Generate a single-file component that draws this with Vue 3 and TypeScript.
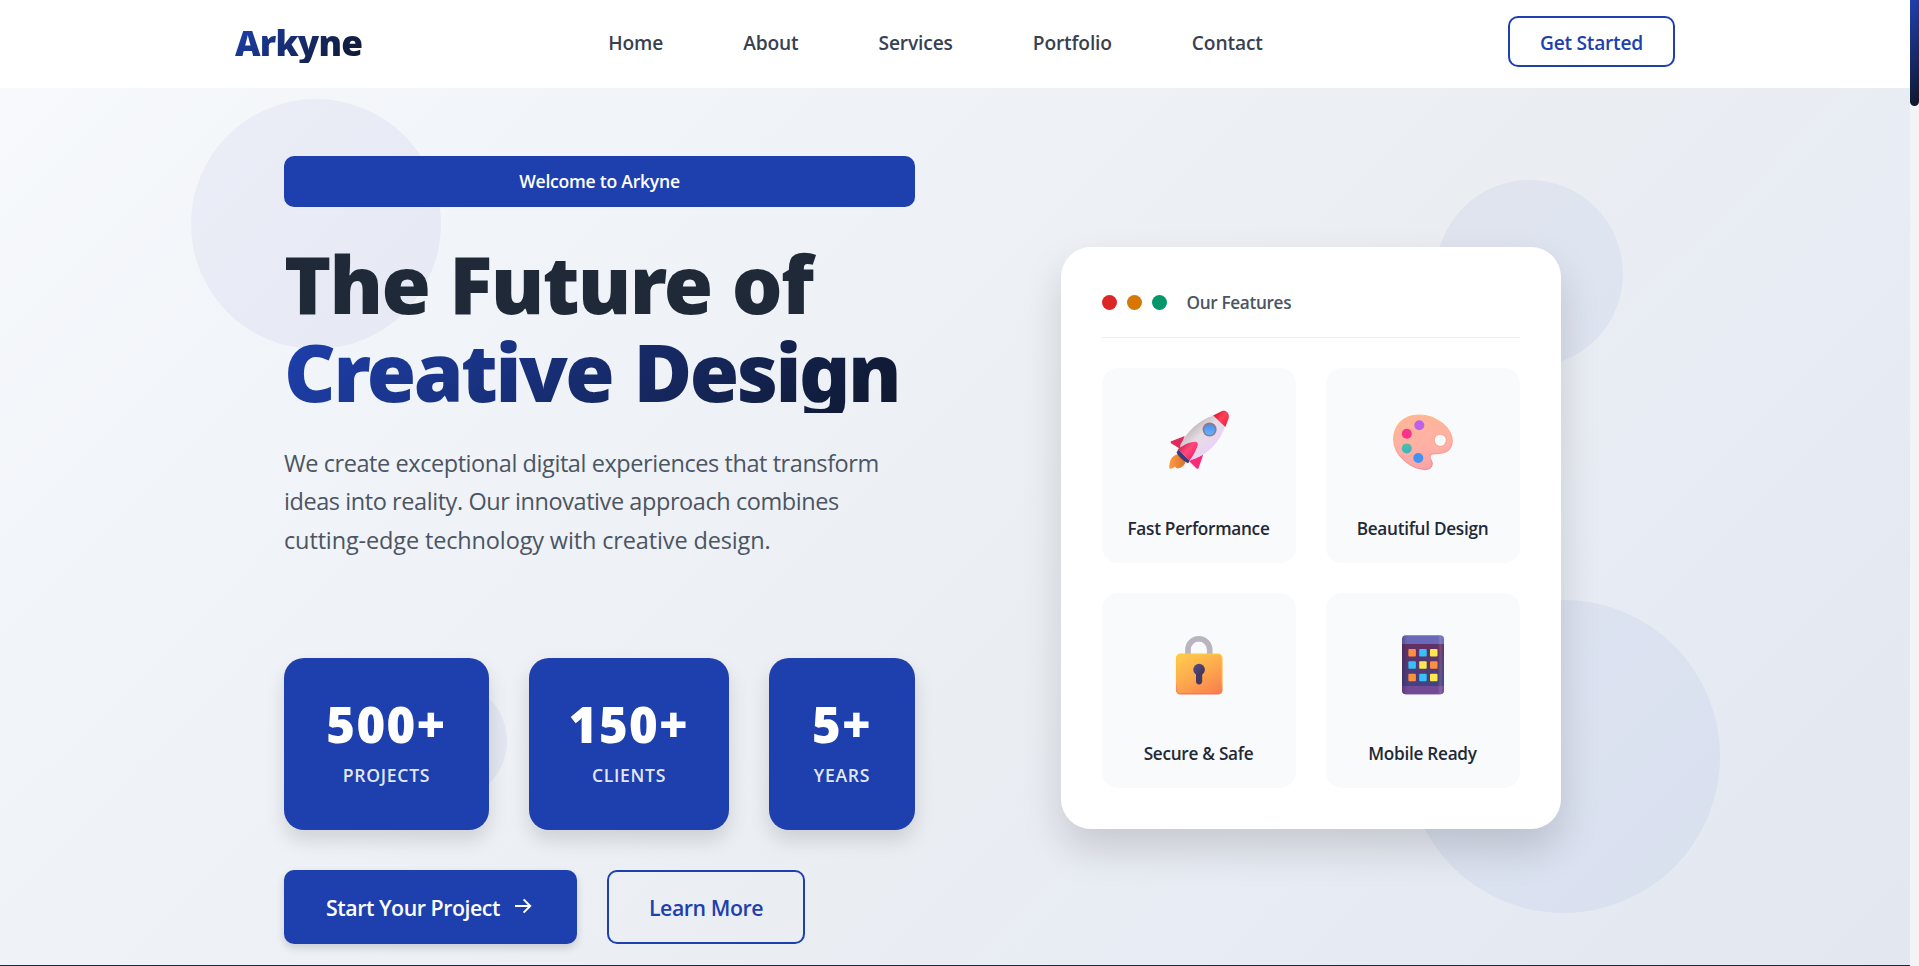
<script setup lang="ts">
interface Stat {
  value: string
  label: string
}

interface Feature {
  icon: 'rocket' | 'palette' | 'lock' | 'phone'
  label: string
}

interface Tile {
  x: number
  y: number
  fill: string
}

const links: string[] = ['Home', 'About', 'Services', 'Portfolio', 'Contact']

const stats: Stat[] = [
  { value: '500+', label: 'Projects' },
  { value: '150+', label: 'Clients' },
  { value: '5+', label: 'Years' },
]

const features: Feature[] = [
  { icon: 'rocket', label: 'Fast Performance' },
  { icon: 'palette', label: 'Beautiful Design' },
  { icon: 'lock', label: 'Secure & Safe' },
  { icon: 'phone', label: 'Mobile Ready' },
]

const orange = '#ff8f3d'
const cyan = '#36c1fd'
const yellow = '#fde84f'

const tileRows: string[][] = [
  [orange, cyan, yellow],
  [cyan, yellow, orange],
  [orange, cyan, yellow],
]

const tiles: Tile[] = tileRows.flatMap((row, r) =>
  row.map((fill, c) => ({ x: 15.4 + c * 10.8, y: 14 + r * 12.35, fill })),
)
</script>

<template>
  <div class="page">
    <header class="header">
      <div class="header-inner">
        <a class="logo">Arkyne</a>
        <nav class="nav">
          <a v-for="link in links" :key="link">{{ link }}</a>
        </nav>
        <button class="cta" type="button">Get Started</button>
      </div>
    </header>

    <section class="hero">
      <span class="circle circle-1"></span>
      <span class="circle circle-2"></span>
      <span class="circle circle-3"></span>
      <span class="circle circle-4"></span>

      <div class="hero-inner">
        <div class="intro">
          <div class="badge">Welcome to Arkyne</div>
          <h1 class="title">
            <span class="line">The Future of</span>
            <span class="line accent">Creative Design</span>
          </h1>
          <p class="lead">
            <span>We create exceptional digital experiences that transform</span>
            <span>ideas into reality. Our innovative approach combines</span>
            <span class="lead-last">cutting-edge technology with creative design.</span>
          </p>
          <div class="stats">
            <div v-for="stat in stats" :key="stat.label" class="stat">
              <div class="stat-value">{{ stat.value }}</div>
              <div class="stat-label">{{ stat.label }}</div>
            </div>
          </div>
          <div class="actions">
            <button class="btn primary" type="button">
              <span>Start Your Project</span>
              <svg class="arrow" viewBox="0 0 18 18" width="18" height="18">
                <path d="M1 9H16M9.6 2.4L16.2 9L9.6 15.6" fill="none" stroke="currentColor" stroke-width="2" />
              </svg>
            </button>
            <button class="btn outline" type="button">Learn More</button>
          </div>
        </div>

        <div class="card">
          <div class="card-head">
            <i class="dot red"></i>
            <i class="dot amber"></i>
            <i class="dot green"></i>
            <span class="card-title">Our Features</span>
          </div>
          <div class="features">
            <div v-for="feature in features" :key="feature.icon" class="feature">
              <svg v-if="feature.icon === 'rocket'" class="icon" viewBox="0 0 60 60">
                <defs>
                  <linearGradient id="rk-body" gradientUnits="userSpaceOnUse" x1="24" y1="14" x2="44" y2="36">
                    <stop offset="0" stop-color="#bfb5ba" />
                    <stop offset=".45" stop-color="#e6dde4" />
                    <stop offset="1" stop-color="#e9d3f3" />
                  </linearGradient>
                  <linearGradient id="rk-nose" gradientUnits="userSpaceOnUse" x1="46" y1="3" x2="59" y2="14">
                    <stop offset="0" stop-color="#d3163a" />
                    <stop offset=".5" stop-color="#ff4355" />
                    <stop offset="1" stop-color="#f0203f" />
                  </linearGradient>
                  <linearGradient id="rk-fin" gradientUnits="userSpaceOnUse" x1="12" y1="34" x2="26" y2="46">
                    <stop offset="0" stop-color="#d02452" />
                    <stop offset=".5" stop-color="#ff4a7c" />
                    <stop offset="1" stop-color="#f81f68" />
                  </linearGradient>
                  <linearGradient id="rk-glass" x1="0" y1="0" x2="0" y2="1">
                    <stop offset="0" stop-color="#4b8df4" />
                    <stop offset="1" stop-color="#62b4ff" />
                  </linearGradient>
                  <linearGradient id="rk-fire" x1="0" y1="0" x2="1" y2="0">
                    <stop offset="0" stop-color="#ff9a3e" />
                    <stop offset="1" stop-color="#d9732f" />
                  </linearGradient>
                </defs>
                <path d="M8.5 44.3C3 46 0 50 .3 58.6C2.5 59.2 4.5 58 6 56.6C7 58 8 59 9.5 58.3C13 57.5 15.5 55.5 16.5 52Z" fill="url(#rk-fire)" />
                <path d="M1.6 31.5L15.7 26L11 38.8L2 33.2Z" fill="#e12a5c" />
                <path d="M34.3 44.6L20 51L27.5 58.6C28.4 59.2 29.3 58.7 29.6 57.9Z" fill="#fb2a78" />
                <path d="M44.6 5.4C30 10 18 21 11.5 34.5L11 40L20.5 50.5C39 45.5 51 32 56.3 15.8C54.5 10.5 50 6.5 44.6 5.4Z" fill="url(#rk-body)" />
                <path d="M7.6 42.5L9.2 39.5L20.6 50.4L19.3 53.2C16 52.5 9.5 47 7.6 42.5Z" fill="#3c3a7c" />
                <path d="M44.2 5.5L52.5 1.2C57.5 -.8 60.8 3.5 59.6 8.3L56.4 17Z" fill="url(#rk-nose)" />
                <path d="M8.7 39.3C13 35.5 20 32.2 26 31.7C28.5 31.7 29.3 33.5 28.6 35.5C27 40.5 24 46 20.5 50.6Z" fill="url(#rk-fin)" />
                <circle cx="40.6" cy="19.5" r="7" fill="#857c90" />
                <circle cx="40.6" cy="19.7" r="5.3" fill="url(#rk-glass)" />
              </svg>

              <svg v-else-if="feature.icon === 'palette'" class="icon" viewBox="0 0 60 60">
                <defs>
                  <linearGradient id="pl-base" x1=".4" y1="0" x2=".55" y2="1">
                    <stop offset="0" stop-color="#ffb698" />
                    <stop offset=".6" stop-color="#ffb0a5" />
                    <stop offset="1" stop-color="#f9a3a4" />
                  </linearGradient>
                  <linearGradient id="pl-rim" x1=".4" y1="0" x2=".55" y2="1">
                    <stop offset="0" stop-color="#fcbd80" />
                    <stop offset=".5" stop-color="#fca995" />
                    <stop offset="1" stop-color="#ef899c" />
                  </linearGradient>
                  <linearGradient id="pl-teal" x1="0" y1="0" x2="0" y2="1">
                    <stop offset="0" stop-color="#4ac3a0" />
                    <stop offset="1" stop-color="#42afc7" />
                  </linearGradient>
                </defs>
                <path
                  d="M26 5C10.5 5 .7 15.5 .7 29.5C.7 46 19 59.4 32 59.4C38.5 59.4 40.4 54.5 38.4 50.8C36 47 36.5 43.6 41.5 43.6C51.5 43.8 59.2 40.5 59.2 31C59.2 18.5 43.5 5 26 5ZM47.3 24.1A6.2 6.2 0 1 1 47.3 36.5A6.2 6.2 0 1 1 47.3 24.1Z"
                  fill="url(#pl-base)" fill-rule="evenodd" stroke="url(#pl-rim)" stroke-width="1.2"
                />
                <circle cx="26.3" cy="15.3" r="5" fill="#bd61ea" />
                <circle cx="13.8" cy="23.8" r="5" fill="#f7338c" />
                <circle cx="13.8" cy="38.4" r="5" fill="url(#pl-teal)" />
                <circle cx="25.3" cy="48" r="5" fill="#4292f5" />
              </svg>

              <svg v-else-if="feature.icon === 'lock'" class="icon" viewBox="0 0 60 60">
                <defs>
                  <linearGradient id="lk-body" x1=".2" y1="0" x2=".8" y2="1">
                    <stop offset="0" stop-color="#ffc84d" />
                    <stop offset=".5" stop-color="#fda94d" />
                    <stop offset="1" stop-color="#f9824f" />
                  </linearGradient>
                  <linearGradient id="lk-rim" x1="0" y1="0" x2="0" y2="1">
                    <stop offset="0" stop-color="#ffc83a" />
                    <stop offset=".7" stop-color="#fcb04a" />
                    <stop offset="1" stop-color="#f2705a" />
                  </linearGradient>
                  <linearGradient id="lk-hole" x1="0" y1="0" x2="1" y2="1">
                    <stop offset="0" stop-color="#54508a" />
                    <stop offset="1" stop-color="#432f52" />
                  </linearGradient>
                </defs>
                <path d="M18.9 22V14.5A10.9 10.7 0 0 1 40.7 14.5V22" fill="none" stroke="#b9b6bb" stroke-width="5.6" />
                <path d="M20.9 22V14.5A8.9 8.9 0 0 1 38.7 14.5V22" fill="none" stroke="#c5aed2" stroke-width="1.4" />
                <rect x="7.5" y="19.2" width="45.5" height="39.7" rx="4" fill="url(#lk-body)" stroke="url(#lk-rim)" stroke-width="1.2" />
                <path d="M27 38H33.2V46.3A3.1 3.1 0 0 1 27 46.3Z" fill="#463863" />
                <circle cx="30.1" cy="34.6" r="5.8" fill="url(#lk-hole)" />
              </svg>

              <svg v-else class="icon" viewBox="0 0 60 60">
                <defs>
                  <linearGradient id="ph-screen" x1="0" y1="0" x2="0" y2="1">
                    <stop offset="0" stop-color="#632f63" />
                    <stop offset="1" stop-color="#434282" />
                  </linearGradient>
                  <linearGradient id="ph-edge" x1="0" y1="0" x2="1" y2="0">
                    <stop offset="0" stop-color="#2c2148" stop-opacity=".35" />
                    <stop offset=".12" stop-color="#2c2148" stop-opacity="0" />
                    <stop offset=".85" stop-color="#fff" stop-opacity="0" />
                    <stop offset=".92" stop-color="#fff" stop-opacity=".14" />
                    <stop offset="1" stop-color="#fff" stop-opacity="0" />
                  </linearGradient>
                </defs>
                <rect x="9" y=".3" width="42" height="59" rx="4" fill="#6a69b8" />
                <path d="M9 51H51V55.3A4 4 0 0 1 47 59.3H13A4 4 0 0 1 9 55.3Z" fill="#734895" />
                <rect x="9" y="9" width="42" height="42" fill="url(#ph-screen)" />
                <rect x="9" y=".3" width="42" height="59" rx="4" fill="url(#ph-edge)" />
                <rect v-for="(tile, i) in tiles" :key="i" :x="tile.x" :y="tile.y" width="7.5" height="7.5" rx="1" :fill="tile.fill" />
              </svg>

              <div class="feature-label">{{ feature.label }}</div>
            </div>
          </div>
        </div>
      </div>
    </section>

    <div class="scroll-track"><div class="scroll-thumb"></div></div>
  </div>
</template>

<style>
body {
  margin: 0;
  overflow: hidden;
}
</style>

<style scoped>
.page {
  position: relative;
  width: 100%;
  height: 966px;
  box-sizing: border-box;
  padding-right: 9px;
  overflow: hidden;
  font-family: "Open Sans", "Noto Sans", sans-serif;
  color: #1f2937;
  background: #f3f4f6;
}

button {
  font: inherit;
  box-sizing: border-box;
  margin: 0;
  cursor: pointer;
}

.header {
  position: absolute;
  z-index: 2;
  top: 0;
  left: 0;
  right: 9px;
  height: 88px;
  background: rgba(255, 255, 255, 0.97);
}

.header-inner {
  display: flex;
  align-items: center;
  justify-content: space-between;
  box-sizing: border-box;
  width: 1440px;
  height: 88px;
  margin: 0 auto;
  padding-bottom: 5px;
}

.logo {
  width: 128px;
  height: 42px;
  margin-top: 1px;
  font-family: "Noto Sans", sans-serif;
  font-size: 35.2px;
  font-weight: 900;
  line-height: 42px;
  letter-spacing: -0.8px;
  white-space: nowrap;
  background: linear-gradient(135deg, #1e40af, #0f172a);
  -webkit-background-clip: text;
  background-clip: text;
  color: transparent;
}

.nav {
  display: flex;
  gap: 80px;
  padding-top: 2px;
  font-size: 19.2px;
  font-weight: 600;
  line-height: 28px;
  letter-spacing: -0.15px;
  color: #374151;
}

.cta {
  width: 167px;
  height: 51px;
  padding: 2px 0 0;
  border: 2px solid #1e40af;
  border-radius: 10px;
  background: transparent;
  color: #1e40af;
  font-size: 19.2px;
  font-weight: 600;
  letter-spacing: -0.25px;
}

.hero {
  position: relative;
  height: 965px;
  border-bottom: 1px solid #1f2937;
  background: linear-gradient(135deg, #f8fafc 0%, #f2f5f9 20%, #ebeef2 55%, #e8ecf4 72%, #e2e7f0 100%);
  overflow: hidden;
}

.circle {
  position: absolute;
  border-radius: 50%;
  background: rgba(45, 68, 205, 0.055);
}

.circle-1 { left: 191px; top: 98.5px; width: 250px; height: 250px; background: rgba(79, 75, 185, 0.055); }
.circle-2 { left: 1436px; top: 179.5px; width: 187px; height: 187px; }
.circle-3 { left: 1407px; top: 600px; width: 313px; height: 313px; }
.circle-4 { left: 387px; top: 681px; width: 120px; height: 120px; }

.hero-inner {
  position: relative;
  display: grid;
  grid-template-columns: 631px 631px;
  gap: 80px;
  justify-content: center;
  align-items: start;
  padding-top: 156px;
}

.badge {
  height: 51px;
  border-radius: 10px;
  background: #1e40af;
  color: #fff;
  font-size: 17.6px;
  font-weight: 600;
  line-height: 50px;
  letter-spacing: -0.25px;
  text-align: center;
}

.title {
  margin: 32px 0 0;
  font-family: "Noto Sans", sans-serif;
  font-size: 80px;
  font-weight: 900;
  line-height: 88px;
}

.line {
  display: block;
  height: 88px;
  white-space: nowrap;
  letter-spacing: -1.7px;
  word-spacing: 1px;
}

.accent {
  height: 86px;
  letter-spacing: -2.5px;
  word-spacing: 3px;
  background: linear-gradient(135deg, #1e40af, #0f172a);
  -webkit-background-clip: text;
  background-clip: text;
  color: transparent;
}

.lead {
  margin: 31px 0 0;
  font-size: 23.5px;
  line-height: 38.4px;
  letter-spacing: -0.43px;
  color: #4b5563;
  white-space: nowrap;
}

.lead span {
  display: block;
}

.lead .lead-last {
  letter-spacing: -0.14px;
}

.stats {
  display: grid;
  grid-template-columns: 205px 200px 146px;
  gap: 40px;
  margin-top: 98.8px;
}

.stat {
  box-sizing: border-box;
  height: 172px;
  padding-top: 36px;
  border-radius: 20px;
  background: #1e40af;
  box-shadow: 0 10px 20px rgba(0, 0, 0, 0.13);
  color: #fff;
  text-align: center;
}

.stat-value {
  font-family: "Noto Sans", sans-serif;
  font-size: 49px;
  font-weight: 900;
  line-height: 61px;
  letter-spacing: 1.4px;
}

.stat-label {
  margin-top: 6px;
  font-size: 17.6px;
  font-weight: 600;
  line-height: 28px;
  letter-spacing: 0.7px;
  text-transform: uppercase;
  color: rgba(255, 255, 255, 0.9);
}

.actions {
  display: flex;
  gap: 30px;
  margin-top: 40px;
}

.btn {
  display: flex;
  align-items: center;
  height: 74px;
  border: 2px solid #1e40af;
  border-radius: 10px;
  font-size: 21.3px;
  font-weight: 600;
  letter-spacing: -0.45px;
  white-space: nowrap;
}

.primary {
  width: 293px;
  padding: 0 0 0 40px;
  gap: 14px;
  background: #1e40af;
  color: #fff;
  box-shadow: 0 4px 8px rgba(0, 0, 0, 0.15);
}

.primary span {
  width: 174px;
  text-align: left;
}

.arrow {
  margin-top: -3px;
}

.outline {
  justify-content: center;
  width: 198px;
  padding: 0;
  background: transparent;
  color: #1e40af;
}

.card {
  justify-self: center;
  box-sizing: border-box;
  width: 500px;
  height: 582px;
  margin-top: 91px;
  padding: 0 41px;
  border-radius: 30px;
  background: #fff;
  box-shadow: 0 20px 40px rgba(0, 0, 0, 0.15);
}

.card-head {
  display: flex;
  align-items: center;
  gap: 10px;
  box-sizing: border-box;
  height: 91px;
  padding-top: 20px;
  border-bottom: 1px solid #eceef0;
}

.dot {
  width: 15px;
  height: 15px;
  border-radius: 50%;
}

.red { background: #dc2626; }
.amber { background: #d97706; }
.green { background: #059669; }

.card-title {
  margin-left: 10px;
  font-size: 17.2px;
  font-weight: 600;
  letter-spacing: -0.34px;
  color: #4b5563;
}

.features {
  display: grid;
  grid-template-columns: 1fr 1fr;
  gap: 30px;
  margin-top: 29.7px;
}

.feature {
  display: flex;
  flex-direction: column;
  align-items: center;
  box-sizing: border-box;
  height: 195px;
  padding-top: 42px;
  border-radius: 16px;
  background: #f9fafc;
}

.icon {
  width: 60px;
  height: 60px;
}

.feature-label {
  margin-top: 45.3px;
  font-size: 17.2px;
  font-weight: 600;
  line-height: 28px;
  letter-spacing: -0.28px;
  white-space: nowrap;
}

.scroll-track {
  position: absolute;
  z-index: 3;
  top: 0;
  right: 0;
  width: 9px;
  height: 966px;
  background: #f3f4f6;
}

.scroll-thumb {
  height: 106px;
  border-radius: 0 0 5px 5px;
  background: linear-gradient(135deg, #1e40af, #0f172a);
}
</style>
